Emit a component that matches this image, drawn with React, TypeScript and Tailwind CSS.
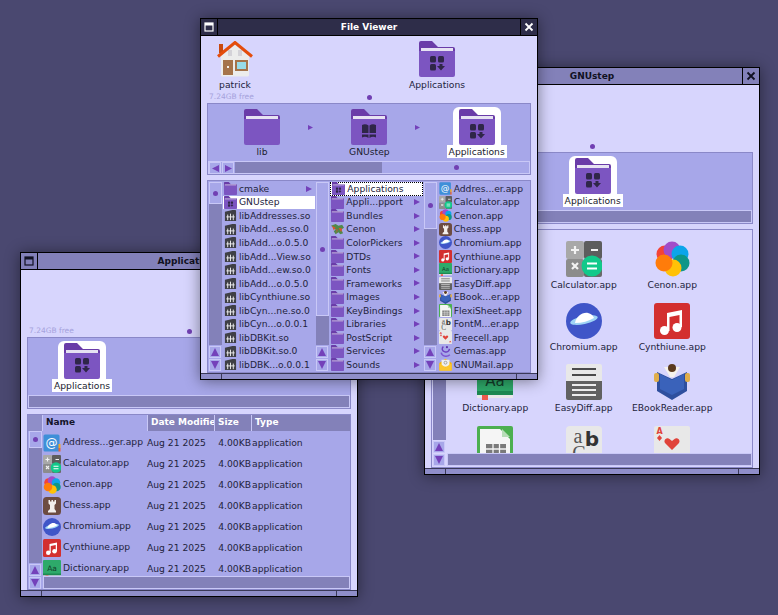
import type { ReactNode } from "react";

const font = "font-['DejaVu_Sans',sans-serif]";

function FolderIcon({ size = 36, glyph }: { size?: number; glyph?: "apps" | "book" }) {
  return (
    <svg width={size} height={size} viewBox="0 0 36 36" className="shrink-0">
      <path d="M0 2a2 2 0 0 1 2-2h11l6 6h15a2 2 0 0 1 2 2v4H0z" fill="#6a3ca8" />
      <rect x="2" y="7" width="32" height="3" fill="#e6e2f2" />
      <path d="M0 10h36v24a2 2 0 0 1-2 2H2a2 2 0 0 1-2-2z" fill="#7c55c1" />
      {glyph === "apps" && (
        <g fill="#2f2648">
          <rect x="11" y="15" width="6" height="6.500" rx="1.500" />
          <rect x="19" y="15" width="6" height="6.500" rx="1.500" />
          <rect x="11" y="23" width="6" height="6.500" rx="1.500" />
          <path d="M20.500 23h3v2H26l-4 4.500-4-4.500h2.500z" />
        </g>
      )}
      {glyph === "book" && (
        <g fill="#2f2648">
          <path d="M11 16c2-1 4.500-1 6.500.5V29c-2-1.500-4.500-1.500-6.500-.5z" />
          <path d="M25 16c-2-1-4.500-1-6.500.5V29c2-1.500 4.500-1.500 6.500-.5z" />
          <path d="M10 24h16v1.500H10z" fill="#7c55c1" />
        </g>
      )}
    </svg>
  );
}

function HomeIcon() {
  return (
    <svg width="36" height="36" viewBox="0 0 36 36" className="shrink-0">
      <rect x="2" y="3" width="4" height="9" fill="#c9490f" />
      <path d="M4 15 18 4l14 11v19a1.500 1.500 0 0 1-1.500 1.500h-25A1.500 1.500 0 0 1 4 34z" fill="#ececec" />
      <path d="M11 9h4v6h-4zM21 9h4v6h-4z" fill="#d4d2d8" />
      <path d="M1 15.500 18 1.500l17 14" fill="none" stroke="#e44d0c" strokeWidth="3" />
      <rect x="6" y="19" width="10" height="15" fill="#a5734a" />
      <rect x="10" y="25" width="2" height="2" fill="#f4efe8" />
      <rect x="18" y="19" width="13" height="11" fill="#a5734a" />
      <rect x="20" y="21" width="9" height="7" fill="#97dbe8" />
    </svg>
  );
}

function LibIcon() {
  return (
    <svg width="13" height="13" viewBox="0 0 14 14" className="shrink-0">
      <path d="M1 3 9 1h3a1 1 0 0 1 1 1v11H1z" fill="#3f3f45" />
      <path d="M4 6v6M7 5v7M10 6v6M2.500 8.500h9" stroke="#f1f1f1" strokeWidth="1" fill="none" />
    </svg>
  );
}

function CenonFolderIcon() {
  return (
    <svg width="13" height="13" viewBox="0 0 14 14" className="shrink-0">
      <path d="M0 3 5 1l3 2 4-1 2 3-3 2 2 4-3 1-2-2-3 2-2-3 2-2z" fill="#4f8a4c" />
      <path d="M1 3 5 5 3 8zM8 5l4 1-1 4z" fill="#d9552b" />
      <path d="M5 6l3 1-2 4z" fill="#8e6f3c" />
    </svg>
  );
}

function AppIcon({ name, size }: { name: string; size: number }) {
  const box = { width: size, height: size, viewBox: "0 0 36 36", className: "shrink-0" };
  switch (name) {
    case "Address":
      return (
        <svg {...box}>
          <rect x="1" y="1" width="32" height="34" rx="3" fill="#3f8fd8" />
          <rect x="31" y="20" width="4" height="8" fill="#f5a623" />
          <rect x="31" y="28" width="4" height="7" fill="#e8623a" />
          <text x="17" y="26" textAnchor="middle" fontSize="24" fontFamily="DejaVu Sans" fill="#fff">@</text>
        </svg>
      );
    case "Calculator":
      return (
        <svg {...box}>
          <rect x="0" y="0" width="18" height="18" rx="2" fill="#a8a8a8" />
          <rect x="18" y="0" width="18" height="18" rx="2" fill="#5d5d5d" />
          <rect x="0" y="18" width="18" height="18" rx="2" fill="#8c8c8c" />
          <rect x="18" y="18" width="18" height="18" rx="2" fill="#6a6a6a" />
          <path d="M9 5v8M5 9h8M25 9h7M6 22l6 6M12 22l-6 6" stroke="#f2f2f2" strokeWidth="2.200" />
          <circle cx="26" cy="25" r="10.500" fill="#12c98a" />
          <path d="M21 22.500h10M21 27.500h10" stroke="#fff" strokeWidth="2" />
        </svg>
      );
    case "Cenon":
      return (
        <svg {...box}>
          <circle cx="11" cy="13" r="8.500" fill="#f44336" />
          <circle cx="18" cy="9" r="8.500" fill="#a14cc9" />
          <circle cx="26" cy="13" r="8.500" fill="#0ca5ea" />
          <circle cx="27" cy="22" r="8.500" fill="#0e9688" />
          <circle cx="19" cy="27" r="8.500" fill="#ffc107" />
          <circle cx="10" cy="22" r="8.500" fill="#ff7c0a" />
        </svg>
      );
    case "Chess":
      return (
        <svg {...box}>
          <rect x="0" y="0" width="36" height="36" rx="7" fill="#6d4c41" />
          <path d="M11 6h3v3h3V6h3v3h3V6h3v7l-3 3v8l3 4v3H10v-3l4-4v-8l-3-3z" fill="#f3efec" />
        </svg>
      );
    case "Chromium":
      return (
        <svg {...box}>
          <circle cx="18" cy="18" r="18" fill="#3f55c8" />
          <ellipse cx="18" cy="17" rx="14" ry="4" transform="rotate(-12 18 17)" fill="#9fd4f5" />
          <path d="M9 20c1-6 7-11 13-10 3 .5 5 2.500 6 5-5 3-12 5-19 5z" fill="#fff" />
        </svg>
      );
    case "Cynthiune":
      return (
        <svg {...box}>
          <rect x="0" y="0" width="36" height="36" rx="3" fill="#d32f2f" />
          <path d="M13 10 28 7v17h-2.500V12L15.500 14v14H13z" fill="#fff" />
          <circle cx="10.500" cy="27.500" r="4.500" fill="#fff" />
          <circle cx="23" cy="24.500" r="4.500" fill="#fff" />
        </svg>
      );
    case "Dictionary":
      return (
        <svg {...box}>
          <rect x="0" y="0" width="36" height="30" rx="2" fill="#2eaa6a" />
          <rect x="0" y="27" width="36" height="4" fill="#1d8a53" />
          <rect x="0" y="31" width="36" height="3" fill="#e9e9e9" />
          <rect x="5" y="31" width="6" height="5" fill="#ef5a4d" />
          <text x="18" y="22" textAnchor="middle" fontSize="15" fontFamily="DejaVu Sans" fill="#123f2a">Aa</text>
        </svg>
      );
    case "EasyDiff":
      return (
        <svg {...box}>
          <rect x="0" y="0" width="36" height="36" rx="2" fill="#e8e8e8" />
          <path d="M0 17h36v17a2 2 0 0 1-2 2H2a2 2 0 0 1-2-2z" fill="#616161" />
          <path d="M6 5h24M6 11h24" stroke="#4a4a4a" strokeWidth="1.800" />
          <path d="M6 21h24M6 26h24M6 31h24" stroke="#ececec" strokeWidth="1.800" />
        </svg>
      );
    case "EBook":
      return (
        <svg {...box}>
          <path d="M3 8 18 15 33 8v19l-15 9-15-9z" fill="#2e4f9e" />
          <path d="M6 10 18 16v15L6 25zM30 10 18 16v15l12-6z" fill="#3a62ba" />
          <path d="M10 3h16l-6 10h-4z" fill="#f5f2ec" />
          <circle cx="18" cy="4" r="4" fill="#5b3a1e" />
          <rect x="0" y="9" width="5" height="9" rx="2" fill="#e0ae4b" />
          <rect x="31" y="9" width="5" height="9" rx="2" fill="#e0ae4b" />
        </svg>
      );
    case "FlexiSheet":
      return (
        <svg {...box}>
          <rect x="0" y="0" width="36" height="36" rx="2" fill="#4caf50" />
          <path d="M3 3h20l10 10v23H3z" fill="#f5f5f5" />
          <path d="M25 3l8 8h-8z" fill="#b7dcb8" />
          <rect x="9" y="18" width="20" height="15" fill="#7a7a7a" />
          <path d="M9 23h20M9 28h20M16 18v15M22.500 18v15" stroke="#f5f5f5" strokeWidth="1.300" />
        </svg>
      );
    case "FontManager":
      return (
        <svg {...box}>
          <rect x="0" y="0" width="36" height="36" rx="4" fill="#e8e8e8" />
          <text x="12" y="17" textAnchor="middle" fontSize="20" fontFamily="Liberation Serif" fill="#555">a</text>
          <text x="26" y="20" textAnchor="middle" fontSize="20" fontWeight="700" fontFamily="DejaVu Sans" fill="#333">b</text>
          <text x="13" y="34" textAnchor="middle" fontSize="20" fontFamily="Liberation Serif" fill="#555">C</text>
        </svg>
      );
    case "Freecell":
      return (
        <svg {...box}>
          <rect x="0" y="0" width="36" height="36" rx="2" fill="#e8e8e8" />
          <text x="5.500" y="8" textAnchor="middle" fontSize="8" fontWeight="700" fontFamily="DejaVu Sans" fill="#e0433a">A</text>
          <path d="M5.500 9 8 12l-2.500 3L3 12z" fill="#e0433a" />
          <path d="M18 24 11 17c-2-3 2-6 4.500-4l2.500 2 2.500-2c2.500-2 6.500 1 4.500 4z" fill="#e0433a" />
          <path d="M31 27l3.500 4h-7z" fill="#e0433a" />
        </svg>
      );
    case "Gemas":
      return (
        <svg {...box}>
          <path d="M12 4c-5 5-4 13 4 15 7 2 12-2 13-8" fill="none" stroke="#6c3fc0" strokeWidth="4" />
          <path d="M6 21c2 10 16 14 24 6" fill="none" stroke="#7d54d0" strokeWidth="4" />
          <circle cx="22" cy="6" r="3" fill="#5b34ab" />
        </svg>
      );
    case "GNUMail":
      return (
        <svg {...box}>
          <path d="M1 14 18 2l17 12v20H1z" fill="#f7b500" />
          <rect x="7" y="5" width="22" height="19" fill="#f0f0f0" />
          <circle cx="18" cy="13" r="4" fill="none" stroke="#888" strokeWidth="2" />
          <path d="M1 14 18 26 35 14v21H1z" fill="#fcc62d" />
        </svg>
      );
    default:
      return null;
  }
}

function Dot() {
  return <span className="block h-[5px] w-[5px] rounded-full bg-[#7140b3]" />;
}

function Triangle({ dir, size = 7 }: { dir: "up" | "down" | "left" | "right"; size?: number }) {
  const points = {
    up: "0,10 5,0 10,10",
    down: "0,0 10,0 5,10",
    left: "10,0 10,10 0,5",
    right: "0,0 10,5 0,10",
  }[dir];
  return (
    <svg width={size} height={size} viewBox="0 0 10 10" className="shrink-0">
      <polygon points={points} fill="#7441ba" />
    </svg>
  );
}

function ScrollButton({ dir }: { dir: "up" | "down" | "left" | "right" }) {
  return (
    <div className="flex h-[12px] w-[12px] items-center justify-center border border-[#c9c8f7] bg-[#a7a7e9]">
      <Triangle dir={dir} size={dir === "up" || dir === "down" ? 8 : 7} />
    </div>
  );
}

function VScroller({ knob }: { knob: string }) {
  return (
    <div className="flex h-full w-[13px] shrink-0 flex-col gap-px">
      <div className={`flex shrink-0 items-center justify-center border border-[#c9c8f7] bg-[#a7a7e9] ${knob}`}>
        <Dot />
      </div>
      <div className="-mt-px flex-1 bg-[#8381b9]" />
      <ScrollButton dir="up" />
      <ScrollButton dir="down" />
    </div>
  );
}

function HScrollerEmpty() {
  return <div className="h-[13px] shrink-0 border border-[#c9c8f7] bg-[#8381b9]" />;
}

function WindowShell({
  title,
  active,
  frame,
  children,
}: {
  title: string;
  active?: boolean;
  frame: string;
  children: ReactNode;
}) {
  const bar = active ? "bg-[#2e2d49] text-white" : "bg-[#8381b9] text-[#111122]";
  const stroke = active ? "#ffffff" : "#111122";
  return (
    <div className={`absolute flex flex-col border border-black bg-[#d7d5fd] shadow-[0_1px_14px_rgba(0,0,0,0.45)] ${frame}`}>
      <div className="flex h-[17px] shrink-0 border-b border-black">
        <div className={`flex w-[17px] items-center justify-center border-r border-black ${bar}`}>
          <svg width="10" height="10" viewBox="0 0 10 10">
            <rect x="1" y="1" width="8" height="8" fill="none" stroke={stroke} strokeWidth="1.200" />
            <rect x="1" y="1" width="8" height="2.500" fill={stroke} />
          </svg>
        </div>
        <div className={`flex flex-1 items-center justify-center pt-[2px] text-[9px] font-bold ${bar}`}>{title}</div>
        <div className={`flex w-[17px] items-center justify-center border-l border-black ${bar}`}>
          <svg width="10" height="10" viewBox="0 0 10 10">
            <path d="M1.500 1.500l7 7M8.500 1.500l-7 7" stroke={stroke} strokeWidth="1.800" />
          </svg>
        </div>
      </div>
      {children}
      <div className="mt-auto flex h-[6px] shrink-0 border-t border-[#3a3958] bg-[#8f8ec9]">
        <div className="w-[21px] border-r border-[#3a3958]" />
        <div className="flex-1" />
        <div className="w-[21px] border-l border-[#3a3958]" />
      </div>
    </div>
  );
}

function FreeRow() {
  return (
    <div className="grid h-[12px] shrink-0 grid-cols-[1fr_auto_1fr] items-center px-[8px] text-[7.500px] leading-none text-[#a5a2dc]">
      <span>7.24GB free</span>
      <Dot />
      <span />
    </div>
  );
}

function PathCell({
  label,
  selected,
  arrow,
  glyph,
}: {
  label?: string;
  selected?: boolean;
  arrow?: boolean;
  glyph?: "apps" | "book";
}) {
  return (
    <div className="grid grid-cols-[30px_48px_30px]">
      <div />
      {label ? (
        <div className="flex flex-col items-center pt-[3px]">
          <div className={`flex h-[38px] w-[48px] items-start justify-center rounded-t-[6px] pt-[2px] ${selected ? "bg-white" : ""}`}>
            <FolderIcon glyph={glyph} />
          </div>
          <span className={`whitespace-nowrap px-[2px] text-[9.200px] leading-[13px] text-[#1c1c30] ${selected ? "bg-white" : ""}`}>
            {label}
          </span>
        </div>
      ) : (
        <div />
      )}
      <div className="flex items-start justify-end pr-[3px] pt-[21px]">{arrow && <Triangle dir="right" size={5} />}</div>
    </div>
  );
}

function BrowserRow({
  icon,
  label,
  arrow,
  selected,
  focused,
}: {
  icon: ReactNode;
  label: string;
  arrow?: boolean;
  selected?: boolean;
  focused?: boolean;
}) {
  return (
    <div
      className={`flex h-[13.540px] shrink-0 items-center gap-[2px] pl-px pr-[3px] text-[9.200px] text-[#23233c] ${
        selected ? "bg-white" : ""
      } ${focused ? "border border-dotted border-black bg-white" : ""}`}
    >
      {icon}
      <span className="flex-1 whitespace-nowrap">{label}</span>
      {arrow && <Triangle dir="right" size={6} />}
    </div>
  );
}

const col1 = [
  "libAddresses.so",
  "libAdd...es.so.0",
  "libAdd...o.0.5.0",
  "libAdd...View.so",
  "libAdd...ew.so.0",
  "libAdd...o.0.5.0",
  "libCynthiune.so",
  "libCyn...ne.so.0",
  "libCyn...o.0.0.1",
  "libDBKit.so",
  "libDBKit.so.0",
  "libDBK...o.0.0.1",
];

const col2 = [
  "Appli...pport",
  "Bundles",
  "Cenon",
  "ColorPickers",
  "DTDs",
  "Fonts",
  "Frameworks",
  "Images",
  "KeyBindings",
  "Libraries",
  "PostScript",
  "Services",
  "Sounds",
];

const apps = [
  { icon: "Address", short: "Addres...er.app", list: "Address...ger.app", full: "Addresses.app" },
  { icon: "Calculator", short: "Calculator.app", list: "Calculator.app", full: "Calculator.app" },
  { icon: "Cenon", short: "Cenon.app", list: "Cenon.app", full: "Cenon.app" },
  { icon: "Chess", short: "Chess.app", list: "Chess.app", full: "Chess.app" },
  { icon: "Chromium", short: "Chromium.app", list: "Chromium.app", full: "Chromium.app" },
  { icon: "Cynthiune", short: "Cynthiune.app", list: "Cynthiune.app", full: "Cynthiune.app" },
  { icon: "Dictionary", short: "Dictionary.app", list: "Dictionary.app", full: "Dictionary.app" },
  { icon: "EasyDiff", short: "EasyDiff.app", list: "EasyDiff.app", full: "EasyDiff.app" },
  { icon: "EBook", short: "EBook...er.app", list: "EBookReader.app", full: "EBookReader.app" },
  { icon: "FlexiSheet", short: "FlexiSheet.app", list: "FlexiSheet.app", full: "FlexiSheet.app" },
  { icon: "FontManager", short: "FontM...er.app", list: "FontManager.app", full: "FontManager.app" },
  { icon: "Freecell", short: "Freecell.app", list: "Freecell.app", full: "Freecell.app" },
  { icon: "Gemas", short: "Gemas.app", list: "Gemas.app", full: "Gemas.app" },
  { icon: "GNUMail", short: "GNUMail.app", list: "GNUMail.app", full: "GNUMail.app" },
];

function FileViewer() {
  return (
    <WindowShell title="File Viewer" active frame="left-[200px] top-[18px] z-20 h-[362px] w-[338px]">
      <div className="flex h-[55px] shrink-0 pt-[5px] text-[9.200px] text-[#23233c]">
        <div className="ml-[7px] flex w-[54px] flex-col items-center">
          <HomeIcon />
          <span className="mt-px leading-[13px]">patrick</span>
        </div>
        <div className="ml-[148px] flex w-[54px] flex-col items-center">
          <FolderIcon glyph="apps" />
          <span className="mt-px whitespace-nowrap leading-[13px]">Applications</span>
        </div>
      </div>
      <FreeRow />
      <div className="mx-[6px] flex h-[72px] shrink-0 flex-col border border-[#8a88c8] bg-[#a7a7e9]">
        <div className="grid h-[57px] grid-cols-3">
          <PathCell label="lib" arrow />
          <PathCell label="GNUstep" glyph="book" arrow />
          <PathCell label="Applications" glyph="apps" selected />
        </div>
        <div className="flex h-[13px] gap-px border border-[#c9c8f7] bg-[#a7a7e9]">
          <ScrollButton dir="left" />
          <ScrollButton dir="right" />
          <div className="w-[147px] bg-[#8381b9]" />
          <div className="flex flex-1 items-center justify-center">
            <Dot />
          </div>
        </div>
      </div>
      <div className="mx-[6px] mt-[5px] grid h-[193px] shrink-0 grid-cols-3 overflow-hidden border border-[#8a88c8] bg-[#a7a7e9] py-px">
        <div className="flex min-h-0 pl-px">
          <VScroller knob="h-[22px]" />
          <div className="ml-px flex flex-1 flex-col overflow-hidden">
            <BrowserRow icon={<FolderIcon size={13} />} label="cmake" arrow />
            <BrowserRow icon={<FolderIcon size={13} glyph="apps" />} label="GNUstep" selected />
            {col1.map((name, i) => (
              <BrowserRow key={i} icon={<LibIcon />} label={name} />
            ))}
            <BrowserRow icon={<LibIcon />} label="" />
          </div>
        </div>
        <div className="flex min-h-0 pl-px">
          <VScroller knob="h-[134px]" />
          <div className="ml-px flex flex-1 flex-col overflow-hidden">
            <BrowserRow icon={<FolderIcon size={13} glyph="apps" />} label="Applications" focused />
            {col2.map((name) =>
              name === "Cenon" ? (
                <BrowserRow key={name} icon={<CenonFolderIcon />} label={name} arrow />
              ) : (
                <BrowserRow key={name} icon={<FolderIcon size={13} />} label={name} arrow />
              ),
            )}
            <BrowserRow icon={<FolderIcon size={13} />} label="" />
          </div>
        </div>
        <div className="flex min-h-0 pl-px">
          <VScroller knob="h-[47px]" />
          <div className="ml-px flex flex-1 flex-col overflow-hidden">
            {apps.map((a) => (
              <BrowserRow key={a.icon} icon={<AppIcon name={a.icon} size={13} />} label={a.short} />
            ))}
            <BrowserRow icon={<AppIcon name="GNUMail" size={13} />} label="" />
          </div>
        </div>
      </div>
    </WindowShell>
  );
}

function ListWindow() {
  return (
    <WindowShell title="Applications" frame="left-[20px] top-[252px] z-10 h-[345px] w-[338px]">
      <div className="h-[55px] shrink-0" />
      <FreeRow />
      <div className="mx-[6px] flex h-[72px] shrink-0 flex-col border border-[#8a88c8] bg-[#a7a7e9]">
        <div className="grid h-[57px] grid-cols-3">
          <PathCell label="Applications" glyph="apps" selected />
        </div>
        <HScrollerEmpty />
      </div>
      <div className="mx-[6px] mt-[5px] flex h-[176px] shrink-0 flex-col overflow-hidden border border-[#8a88c8] bg-[#a7a7e9]">
        <div className="grid h-[16px] shrink-0 grid-cols-[15px_105px_67px_37px_1fr] text-[9px] font-bold leading-[15px]">
          <div className="border-r border-[#c9c8f7] bg-[#8f8ec9]" />
          <div className="border-r border-[#c9c8f7] bg-[#a7a7e9] pl-[3px] text-[#14142a]">Name</div>
          <div className="overflow-hidden whitespace-nowrap border-r border-[#c9c8f7] bg-[#8381b9] pl-[3px] text-white">Date Modified</div>
          <div className="border-r border-[#c9c8f7] bg-[#8381b9] pl-[3px] text-white">Size</div>
          <div className="bg-[#8381b9] pl-[3px] text-white">Type</div>
        </div>
        <div className="flex min-h-0 flex-1 pl-px">
          <VScroller knob="h-[17px]" />
          <div className="ml-px flex min-w-0 flex-1 flex-col">
            <div className="flex min-h-0 flex-1 flex-col overflow-hidden pt-px">
              {apps.slice(0, 7).map((a) => (
                <div
                  key={a.icon}
                  className="grid h-[21px] shrink-0 grid-cols-[104px_67px_37px_1fr] items-center text-[9.200px] text-[#23233c]"
                >
                  <div className="flex items-center gap-[2px] overflow-hidden whitespace-nowrap">
                    <AppIcon name={a.icon} size={18} />
                    <span className="-mt-[2px]">{a.list}</span>
                  </div>
                  <span className="whitespace-nowrap">Aug 21 2025</span>
                  <span className="whitespace-nowrap text-right">4.00KB</span>
                  <span className="pl-px">application</span>
                </div>
              ))}
            </div>
            <HScrollerEmpty />
          </div>
        </div>
      </div>
    </WindowShell>
  );
}

function IconWindow() {
  return (
    <WindowShell title="GNUstep" frame="left-[424px] top-[67px] z-10 h-[408px] w-[336px]">
      <div className="h-[55px] shrink-0" />
      <FreeRow />
      <div className="mx-[6px] flex h-[72px] shrink-0 flex-col border border-[#8a88c8] bg-[#a7a7e9]">
        <div className="grid h-[57px] grid-cols-3">
          <PathCell />
          <PathCell label="Applications" glyph="apps" selected />
        </div>
        <HScrollerEmpty />
      </div>
      <div className="mx-[6px] mt-[5px] flex h-[239px] shrink-0 border border-[#8a88c8] py-px pl-px">
        <VScroller knob="h-[24px]" />
        <div className="ml-px flex min-w-0 flex-1 flex-col">
          <div className="min-h-0 flex-1 overflow-hidden pl-[4px] pt-[10px]">
            <div className="grid grid-cols-[88.500px_88.500px_88.500px] auto-rows-[61.700px]">
              {apps.slice(0, 12).map((a) => (
                <div key={a.icon} className="flex flex-col items-center text-[9.200px] text-[#23233c]">
                  <AppIcon name={a.icon} size={36} />
                  <span className="mt-px whitespace-nowrap leading-[13px]">{a.full}</span>
                </div>
              ))}
            </div>
          </div>
          <HScrollerEmpty />
        </div>
      </div>
    </WindowShell>
  );
}

export default function App() {
  return (
    <div className={`relative h-[615px] w-[778px] overflow-hidden bg-[#4a4870] ${font}`}>
      <IconWindow />
      <ListWindow />
      <FileViewer />
    </div>
  );
}
